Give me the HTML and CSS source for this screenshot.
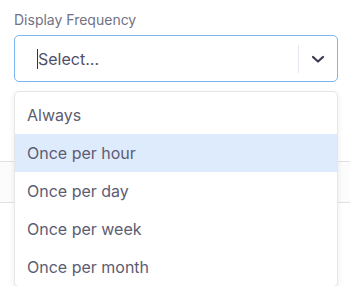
FILE: index.html
```html
<!DOCTYPE html>
<html>
<head>
<meta charset="utf-8">
<link rel="stylesheet" href="styles.css">
</head>
<body>
<div class="page">
  <div class="field">
    <label class="label">Display Frequency</label>
    <div class="control">
      <div class="value"><span class="caret"></span><span class="placeholder">Select...</span></div>
      <div class="indicators">
        <span class="sep"></span>
        <span class="chev">
          <svg width="20" height="20" viewBox="0 0 20 20"><path d="M5 8 L10 12.5 L15 8" fill="none" stroke="#3a3a50" stroke-width="2.2" stroke-linecap="round" stroke-linejoin="round"/></svg>
        </span>
      </div>
    </div>
    <div class="menu">
      <div class="option">Always</div>
      <div class="option focused">Once per hour</div>
      <div class="option">Once per day</div>
      <div class="option">Once per week</div>
      <div class="option">Once per month</div>
    </div>
  </div>
  <div class="under">
    <div class="row row1"></div>
    <div class="row row2"></div>
  </div>
</div>
</body>
</html>
```
FILE: styles.css
```css
html, body {
  margin: 0;
  padding: 0;
  background: #ffffff;
}
body {
  width: 350px;
  height: 286px;
  overflow: hidden;
  font-family: Inter, Lato, "Noto Sans", sans-serif;
}
.page {
  position: relative;
  padding: 10px 12px 0 14px;
}
.field {
  position: relative;
}
.label {
  display: block;
  font-size: 14px;
  line-height: 20px;
  color: #727284;
  margin-bottom: 5px;
}
.control {
  display: flex;
  align-items: center;
  height: 47px;
  box-sizing: border-box;
  border: 1px solid #7db4f2;
  border-radius: 5px;
  background: #fff;
}
.value {
  flex: 1;
  display: flex;
  align-items: center;
  padding-left: 22px;
}
.caret {
  display: inline-block;
  width: 1px;
  height: 20px;
  background: #333344;
}
.placeholder {
  font-size: 16px;
  color: #50506a;
}
.indicators {
  display: flex;
  align-items: center;
  height: 100%;
}
.sep {
  width: 1px;
  height: 28px;
  background: #e3e8f0;
}
.chev {
  display: flex;
  align-items: center;
  justify-content: center;
  width: 38px;
  height: 38px;
}
.menu {
  position: absolute;
  top: 81px;
  left: 0;
  right: 0;
  z-index: 2;
  background: #fff;
  border: 1px solid #e6e6e6;
  border-radius: 5px;
  box-shadow: 0 2px 6px rgba(0,0,0,0.08);
  padding-top: 4px;
}
.option {
  height: 38px;
  line-height: 38px;
  padding-left: 12px;
  font-size: 16px;
  color: #5c5c72;
}
.option.focused {
  background: #deebfd;
}
.under {
  position: absolute;
  left: 0;
  right: 0;
  top: 161px;
}
.row {
  border-top: 1px solid #e2e2e2;
}
.row1 {
  height: 40px;
  background: #fcfcfc;
}
```
